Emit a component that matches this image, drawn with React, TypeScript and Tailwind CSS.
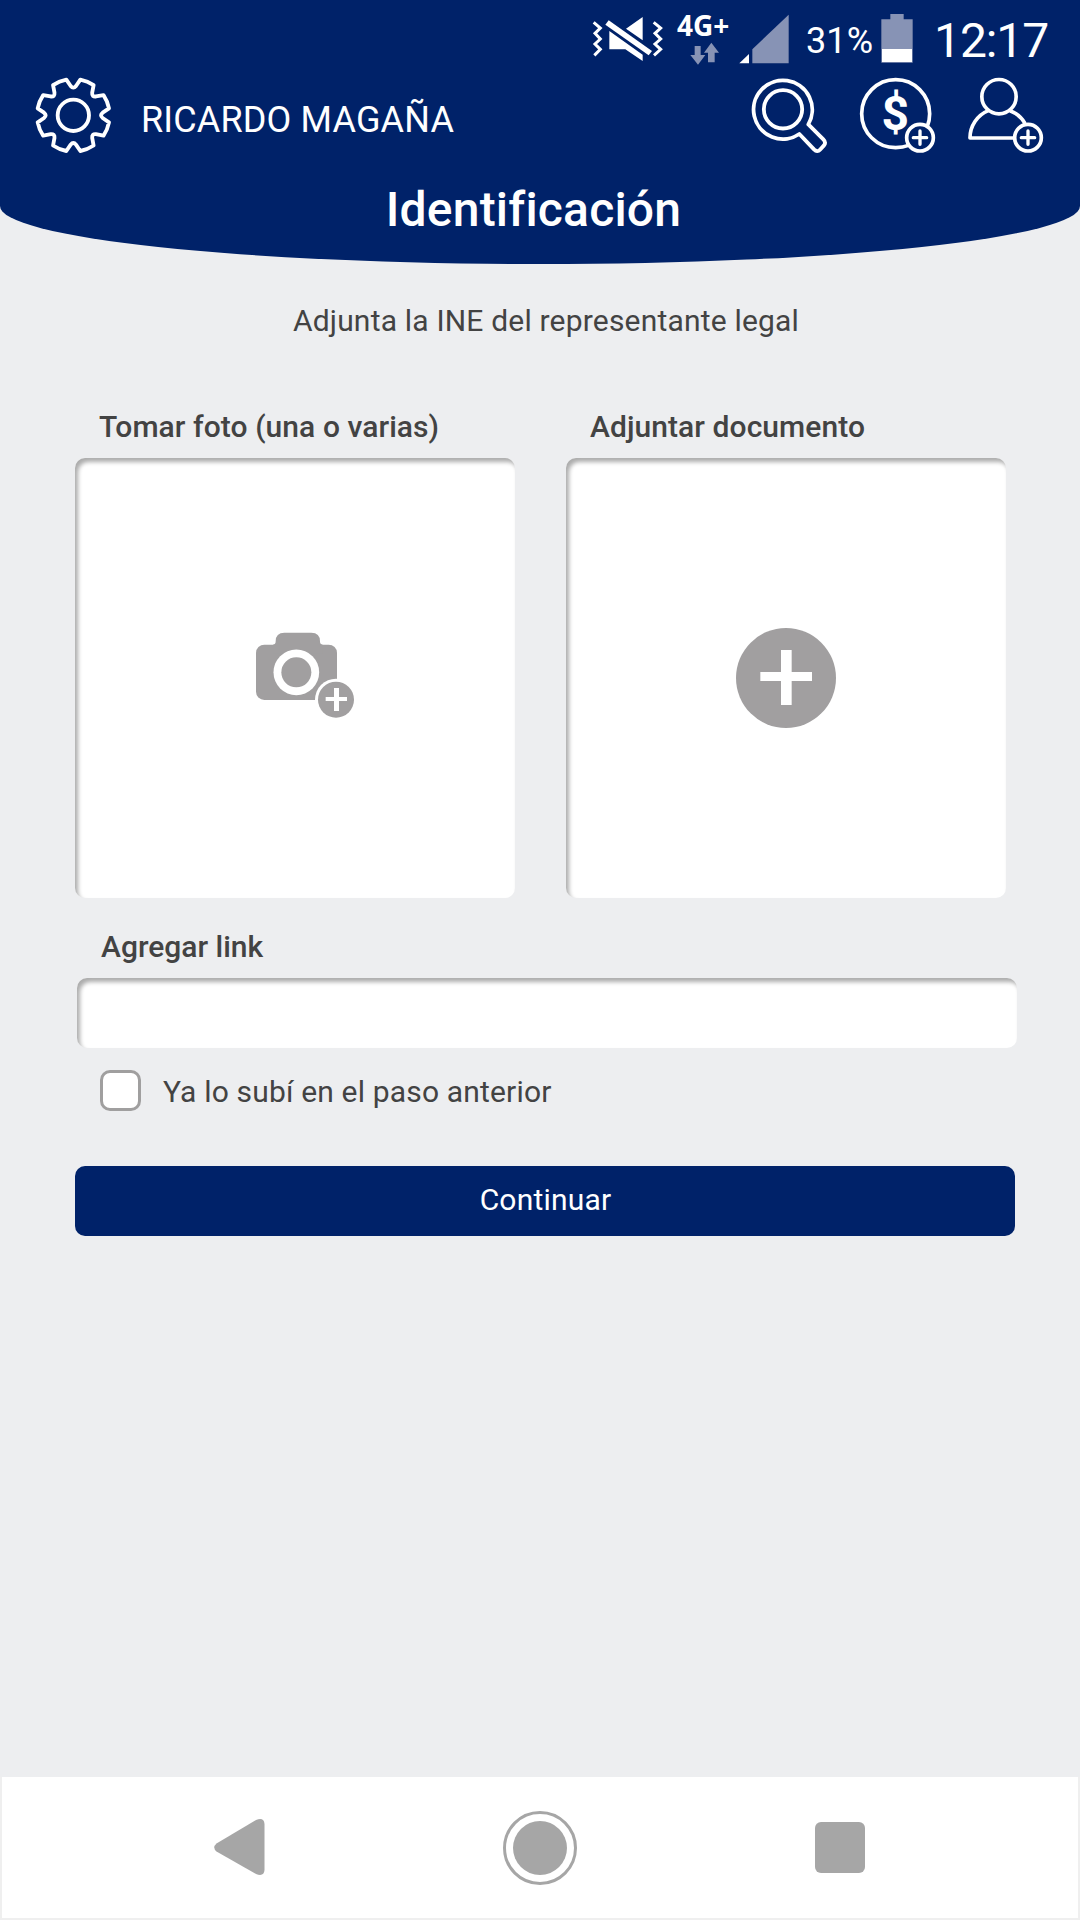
import React from "react";

const GRAY = "#a19fa0";

function gearPath() {
  const pt = (x: number, y: number, k: number) => {
    const a = (k * Math.PI) / 4;
    const px = x * Math.cos(a) - y * Math.sin(a);
    const py = x * Math.sin(a) + y * Math.cos(a);
    return `${px.toFixed(2)} ${py.toFixed(2)}`;
  };
  let d = `M${pt(-21, -107, 0)}`;
  for (let k = 0; k < 8; k++) {
    d += `L${pt(-8, -88, k)}Q${pt(0, -78, k)} ${pt(8, -88, k)}L${pt(21, -107, k)}A109 109 0 0 1 ${pt(-21, -107, k + 1)}`;
  }
  return d + "Z";
}

function StatusBar() {
  return (
    <div className="flex h-[70px] pl-[590px] text-white">
      <svg className="h-[70px] w-[84px] shrink-0" viewBox="60 0 252 210" fill="#fff">
        <path d="M71 67 91 84 75 100 91 117 75 132 91 148 73 166M251 67 272 84 255 100 272 117 255 132 272 148 252 166" fill="none" stroke="#fff" strokeWidth="9" />
        <path d="M118 93 218 164V183L166 148H118ZM168 86 218 51V121Z" />
        <path d="M116 61 246 153 236 166 106 74Z" />
      </svg>
      <div className="w-[62px] shrink-0">
        <div className="mt-[8px] h-[34px] pl-[3px] font-['Open_Sans'] text-[28px] leading-[35px] font-bold">4G+</div>
        <svg className="h-[24px] w-[60px]" viewBox="312 126 180 72" fill="#8793b5">
          <path d="M374 138H392V165H406L384 194 361 165H374ZM414 187V158H402L424 128 447 158H434V187Z" />
        </svg>
      </div>
      <svg className="h-[70px] w-[68px] shrink-0" viewBox="498 0 204 210">
        <path d="M508 190H537V162Z" fill="#fff" />
        <path d="M547 190H656V44L547 148Z" fill="#8793b5" />
      </svg>
      <div className="w-[77px] shrink-0 pt-[21px] pl-[2px] text-[36px] leading-[40px] tracking-[0.1px] whitespace-nowrap">31%</div>
      <svg className="h-[70px] w-[32px] shrink-0" viewBox="243 0 96 210">
        <path d="M271 42H311V58H338V188H244V58H271Z" fill="#8793b5" />
        <path d="M246 147H336V186H246Z" fill="#fff" />
      </svg>
      <div className="pt-[16px] pl-[21px] text-[48px] leading-[50px] tracking-[-1.1px] whitespace-nowrap">12:17</div>
    </div>
  );
}

function PlusBadge({ cx }: { cx: number }) {
  return (
    <g fill="#002269">
      <circle cx={cx} cy="233" r="40" />
      <path d={`M${cx - 20} 233h40M${cx} 213v40`} strokeLinecap="round" strokeWidth="10" />
    </g>
  );
}

function TopBar() {
  return (
    <div className="flex h-[90px] items-start pl-[33px] text-white">
      <svg className="mt-[5px] h-[80px] w-[80px] shrink-0" viewBox="-121 -121 240 240" fill="none" stroke="#fff" strokeWidth="11.500" strokeLinejoin="round">
        <path d={gearPath()} />
        <circle r="47" />
      </svg>
      <div className="w-[607px] shrink-0 pt-[25px] pl-[28px] text-[36px] leading-[50px] tracking-[0.15px] whitespace-nowrap">RICARDO MAGAÑA</div>
      <svg className="h-[90px] w-[108px] shrink-0" viewBox="-30 30 324 270" fill="none" stroke="#fff" strokeWidth="11.500" strokeLinejoin="round">
        <path d="M235 193A88 88 0 1 0 208 222L252 268Q262 278 270 269L282 256Q289 247 280 238Z" />
        <circle cx="159" cy="148" r="57.500" />
      </svg>
      <svg className="h-[90px] w-[108px] shrink-0" viewBox="294 30 324 270" fill="none" stroke="#fff" strokeWidth="11">
        <circle cx="497" cy="161" r="102" />
        <text x="495.5" y="210" textAnchor="middle" fontFamily="Roboto" fontWeight="700" fontSize="144" fill="#fff" stroke="none">$</text>
        <PlusBadge cx={570} />
      </svg>
      <svg className="h-[90px] w-[112px] shrink-0" viewBox="618 30 336 270" fill="none" stroke="#fff" strokeWidth="11" strokeLinejoin="round">
        <circle cx="807" cy="110" r="51.500" />
        <path d="M775 152A88 88 0 0 0 720 234H850M840 152A88 88 0 0 1 885 190" />
        <PlusBadge cx={894} />
      </svg>
    </div>
  );
}

const field = "bg-white shadow-[inset_3px_4px_4px_#acacac]";

function UploadBox({ label, children }: { label: string; children: React.ReactNode }) {
  return (
    <div className="w-[440px]">
      <div className="h-[52px] pt-px pl-[24px] text-[30px] leading-[40px] font-medium tracking-[0.07px] whitespace-nowrap">{label}</div>
      <button className={`flex h-[440px] w-[440px] rounded-[10px] ${field}`}>{children}</button>
    </div>
  );
}

export default function App() {
  return (
    <div className="flex h-[1920px] w-[1080px] flex-col overflow-hidden bg-[#edeef0] font-['Roboto',sans-serif] text-[#434343]">
      <header className="h-[264px] shrink-0 rounded-b-[50%_58px] bg-[#002269]">
        <StatusBar />
        <TopBar />
        <h1 className="pt-[20px] pr-[13px] text-center text-[48px] leading-[60px] font-medium tracking-[0.2px] text-white">Identificación</h1>
      </header>

      <main className="flex grow flex-col">
        <p className="mt-[37px] pl-[12px] text-center text-[30px] leading-[40px] tracking-[0.19px]">Adjunta la INE del representante legal</p>

        <div className="mt-[65px] flex gap-[51px] pl-[75px]">
          <UploadBox label="Tomar foto (una o varias)">
            <svg className="mt-[152px] ml-[155px] h-[130px] w-[150px]" viewBox="0 0 450 390" fill={GRAY}>
              <rect x="78" y="104" width="243" height="166" rx="25" />
              <path d="M129 104Q137 104 137 94Q137 68 163 68H244Q270 68 270 94Q270 104 278 104V130H129Z" />
              <circle cx="199" cy="187" r="68.500" fill="#fff" />
              <circle cx="199" cy="187" r="45" />
              <circle cx="318" cy="269" r="63" fill="#fff" />
              <circle cx="318" cy="269" r="54" />
              <path d="M312 234H327V303H312ZM287 261H351V273H287Z" fill="#fff" />
            </svg>
          </UploadBox>
          <UploadBox label="Adjuntar documento">
            <svg className="mt-[152px] ml-[154px] h-[130px] w-[150px]" viewBox="0 0 450 390" fill={GRAY}>
              <circle cx="198" cy="204" r="150" />
              <path d="M183 120H215V285H183ZM121 186H276V213H121Z" fill="#fff" />
            </svg>
          </UploadBox>
        </div>

        <label className="mt-[29px] pl-[101px] text-[30px] leading-[40px] font-medium">Agregar link</label>
        <input className={`mt-[11px] ml-[77px] h-[70px] w-[940px] rounded-[10px] outline-none ${field}`} />

        <label className="mt-[22px] flex h-[41px] items-center pl-[100px] text-[30px] tracking-[0.17px]">
          <span className="h-[41px] w-[41px] rounded-[10px] border-[3px] border-[#a09f9f] bg-white" />
          <span className="pt-[3px] pl-[22px] leading-[40px]">Ya lo subí en el paso anterior</span>
        </label>

        <button className="mt-[55px] ml-[75px] h-[70px] w-[940px] rounded-[10px] bg-[#002269] pb-[2px] pl-[1px] text-[30px] leading-[40px] tracking-[0.2px] text-white">
          Continuar
        </button>
      </main>

      <nav className="flex h-[143px] shrink-0 border-x-2 border-b-2 border-[#efefef] bg-white">
        <svg className="mt-[41px] ml-[212px] h-[58px] w-[52px]" viewBox="214 1818 52 58" fill="#a6a6a6">
          <path d="M216.500 1843.500L256 1820Q264 1817 264.500 1824V1870Q264 1877 256 1874L216.500 1851.500Q212 1847.500 216.500 1843.500Z" />
        </svg>
        <div className="mt-[34px] ml-[237px] flex h-[74px] w-[74px] items-center justify-center rounded-full border-[3px] border-[#a6a6a6]">
          <div className="h-[54px] w-[54px] rounded-full bg-[#a6a6a6]" />
        </div>
        <div className="mt-[45px] ml-[238px] h-[51px] w-[50px] rounded-[6px] bg-[#a6a6a6]" />
      </nav>
    </div>
  );
}
